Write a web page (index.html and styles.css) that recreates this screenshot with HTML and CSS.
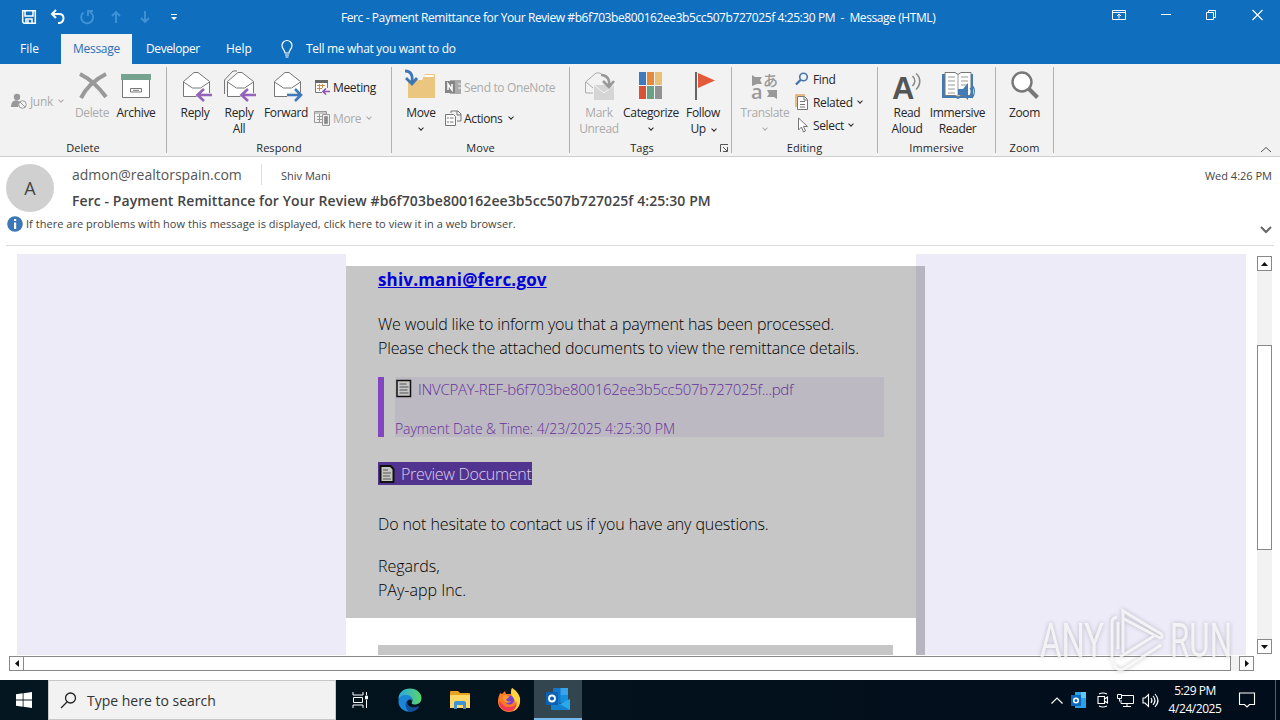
FILE: index.html
```html
<!DOCTYPE html>
<html lang="en">
  <head>
    <meta charset="UTF-8" />
    <meta name="viewport" content="width=device-width, initial-scale=1.0" />
    <title>Message (HTML)</title>
    <link rel="stylesheet" href="styles.css">
  </head>
  <body>
    <header class="titlebar">
      <div class="quick">
        <svg width="16" height="16" viewBox="0 0 16 16" fill="none" stroke="#fff" stroke-width="1.5"><path d="M1.7 1.7h12.6v12.6H3L1.7 13zM4 2v5h8V2M5 14v-4h6v4M7 11v3" /></svg>
        <svg width="16" height="16" viewBox="0 0 16 16" fill="none" stroke="#fff" stroke-width="2"><path d="M6 1L2 5l4 4M2 5h7c6 0 6 8 0 9H8" /></svg>
        <svg class="dim" width="16" height="16" viewBox="0 0 16 16" fill="none" stroke="#7cc0f2" stroke-width="1.8"><path d="M4.5 3.5A6 6 0 1 0 11 3M9 7V2h5" /></svg>
        <svg class="dim" width="16" height="16" viewBox="0 0 16 16" fill="none" stroke="#7cc0f2" stroke-width="1.8"><path d="M8 14V3M4 7l4-4 4 4" /></svg>
        <svg class="dim" width="16" height="16" viewBox="0 0 16 16" fill="none" stroke="#7cc0f2" stroke-width="1.8"><path d="M8 2v11M4 9l4 4 4-4" /></svg>
        <svg width="16" height="16" viewBox="0 0 16 16" fill="#fff"><path d="M5 5h6v1H5zM5 8h6l-3 3z" /></svg>
      </div>
      <div class="title">Ferc - Payment Remittance for Your Review #b6f703be800162ee3b5cc507b727025f 4:25:30 PM&nbsp; -&nbsp; Message (HTML)</div>
      <div class="window_buttons">
        <svg width="14" height="12" viewBox="0 0 14 12" fill="none" stroke="#fff"><path d="M.5 1.5h13v9H.5zM.5 3.5h13M7 9.500V5M5 7l2-2 2 2" /></svg>
        <svg width="10" height="12" viewBox="0 0 10 12" fill="none" stroke="#fff"><path d="M0 5.500h10" /></svg>
        <svg width="11" height="12" viewBox="0 0 11 12" fill="none" stroke="#fff"><path d="M.5 3.500h7v7h-7zM2.500 3V1.500h7v7H8" /></svg>
        <svg width="11" height="12" viewBox="0 0 11 12" fill="none" stroke="#fff" stroke-width="1.100"><path d="M.5 1l10 10M10.500 1l-10 10" /></svg>
      </div>
    </header>

    <nav class="tabs">
      <a class="tab file">File</a>
      <a class="tab active">Message</a>
      <a class="tab developer">Developer</a>
      <a class="tab help">Help</a>
      <svg width="14" height="18" viewBox="0 0 14 18" fill="none" stroke="#fff" stroke-width="1.200"><path d="M5 13c0-3-3-4-3-7.500a5 5 0 0 1 10 0C12 9 9 10 9 13zM5 15h4M5.500 17h3" /></svg>
      <a class="tab tell">Tell me what you want to do</a>
    </nav>

    <section class="ribbon">
      <div class="group g_delete">
        <div class="tools">
          <div class="stack middle junk">
            <div class="small off">
              <svg width="16" height="16" viewBox="0 0 16 16"><circle cx="6" cy="4" r="3.200" fill="#999" /><path d="M0 14c0-8 8-8 9-4l-2 4z" fill="#999" /><g fill="#f2f2f2" stroke="#999"><circle cx="11.500" cy="11.500" r="3.800" /><path d="M9 9l5 5" /></g></svg>
              <span>Junk</span><i class="arrow"></i>
            </div>
          </div>
          <div class="big off">
            <svg width="32" height="32" viewBox="0 0 32 32" fill="none" stroke="#999" stroke-width="4"><path d="M4 4c8 4 18 12 26 23M30 4C20 9 10 18 5 28" /></svg>
            <span>Delete</span>
          </div>
          <div class="big">
            <svg width="32" height="32" viewBox="0 0 32 32"><path d="M2.500 9h27v18.500h-27z" fill="#fff" stroke="#777" /><path d="M1 4h30v6H1z" fill="#75a38f" /><path d="M10.500 18.500h11v3.500h-11zM13 20.300h6" fill="#fff" stroke="#777" /></svg>
            <span>Archive</span>
          </div>
        </div>
        <div class="caption">Delete</div>
      </div>

      <div class="group g_respond">
        <div class="tools">
          <div class="big">
            <svg width="32" height="32" viewBox="0 0 32 32"><path d="M4.500 11.500L15 2.500h4l11.500 9v15h-26z" fill="#fff" stroke="#777" /><path d="M4.500 12l9 6h8l9-6" fill="none" stroke="#777" /><path d="M16 25l7-7v5h10v4H23v5z" fill="#f2f2f2" /><path d="M33 25H19M25 19l-6.500 6 6.500 6" fill="none" stroke="#9463ba" stroke-width="2.600" /></svg>
            <span>Reply</span>
          </div>
          <div class="big">
            <svg width="32" height="32" viewBox="0 0 32 32"><path d="M1.500 24V10L10 1h4" fill="none" stroke="#777" /><path d="M4.500 11.500L15 2.500h4l11.500 9v15h-26z" fill="#fff" stroke="#777" /><path d="M4.500 12l9 6h8l9-6" fill="none" stroke="#777" /><path d="M16 25l7-7v5h10v4H23v5z" fill="#f2f2f2" /><path d="M33 25H19M25 19l-6.500 6 6.500 6" fill="none" stroke="#9463ba" stroke-width="2.600" /></svg>
            <span>Reply<br>All</span>
          </div>
          <div class="big forward">
            <svg width="32" height="32" viewBox="0 0 32 32"><path d="M4.500 11.500L15 2.500h4l11.500 9v15h-26z" fill="#fff" stroke="#777" /><path d="M4.500 12l9 6h8l9-6" fill="none" stroke="#777" /><path d="M33 25l-8-8v5H17v5h8v5z" fill="#f2f2f2" /><path d="M17 25h14M25 19l6 6-6 6" fill="none" stroke="#3d79bb" stroke-width="2.600" /></svg>
            <span>Forward</span>
          </div>
          <div class="stack two">
            <div class="small">
              <svg width="16" height="16" viewBox="0 0 16 16"><path d="M1.500 2.500h12v11h-12z" fill="#fff" stroke="#777" /><path d="M1 1h13v3H1z" fill="#666" /><path d="M3 6.500h8M3 9.500h8M5.500 5v7M8.500 5v7" stroke="#d08b45" /><path d="M8 9h8v7H8z" fill="#f2f2f2" /><path d="M16 12.500H9.500M12 9.500l-3 3 3 3" fill="none" stroke="#8b51b5" stroke-width="1.600" /></svg>
              <span>Meeting</span>
            </div>
            <div class="small off">
              <svg width="16" height="16" viewBox="0 0 16 16" fill="none" stroke="#999"><path d="M.5 1.500h12v11H.5zM1 3h11M3 6.500h7M3 9.500h6M5.500 4v8" /><path d="M8.500 4.500h7v11h-7z" fill="#eee" /><path d="M10.500 6.500h3v7h-3z" fill="#888" /></svg>
              <span>More</span><i class="arrow"></i>
            </div>
          </div>
        </div>
        <div class="caption">Respond</div>
      </div>

      <div class="group g_move">
        <div class="tools">
          <div class="big">
            <svg width="32" height="32" viewBox="0 0 32 32"><path d="M3 28V10h14l3-6h10v24z" fill="#eac67e" /><path d="M19 7l1-2h9v2z" fill="#fff" /><path d="M0 1c6 0 8 4 7 12M1 8l6 6 5-6" fill="none" stroke="#3e77b6" stroke-width="2.800" /></svg>
            <span>Move</span><i class="arrow"></i>
          </div>
          <div class="stack two">
            <div class="small off">
              <svg width="16" height="16" viewBox="0 0 16 16"><path d="M5 1h11v14H5z" fill="#aaa" /><path d="M13 5h3M13 9h3" stroke="#eee" /><path d="M0 2h10v12H0z" fill="#858585" /><path d="M3 11V5l4 6V5" fill="none" stroke="#fff" stroke-width="1.500" /></svg>
              <span>Send to OneNote</span>
            </div>
            <div class="small">
              <svg width="16" height="16" viewBox="0 0 16 16" fill="#fff" stroke="#777"><path d="M6 3V1h7l3 3v7h-4M12 1v4h4" fill="none" /><path d="M.5 4.500h8l2 2v9H.500z" /><path d="M3 7v2M3 11v2M5 8h3.500M5 12h3.500" /></svg>
              <span>Actions</span><i class="arrow"></i>
            </div>
          </div>
        </div>
        <div class="caption">Move</div>
      </div>

      <div class="group g_tags">
        <div class="tools">
          <div class="big off">
            <svg width="32" height="32" viewBox="0 0 32 32"><path d="M2.500 23V12L13 3h4l7 6M3 12l7 6M3 23h7" fill="none" stroke="#aaa" /><path d="M11 15h20v15H11z" fill="#d5d5d5" /><path d="M11 15l10 8 10-8" fill="none" stroke="#f2f2f2" /><path d="M18 5c7 0 9 5 8 12M20 11l6 6 5-6" fill="none" stroke="#999" stroke-width="2.600" /></svg>
            <span>Mark<br>Unread</span>
          </div>
          <div class="big categorize">
            <svg width="32" height="32" viewBox="0 0 32 32"><path d="M4 2h7v13H4z" fill="#3f7abb" /><path d="M12 2h7v13h-7z" fill="#e58a38" /><path d="M20 2h7v13h-7z" fill="#eac078" /><path d="M4 16h7v13H4z" fill="#d85236" /><path d="M12 16h7v13h-7z" fill="#68a186" /><path d="M20 16h7v13h-7z" fill="#929292" /></svg>
            <span>Categorize</span><i class="arrow"></i>
          </div>
          <div class="big">
            <svg width="32" height="32" viewBox="0 0 32 32"><path d="M8 2h2v28H8z" fill="#666" /><path d="M11 3l17 7.500L11 18z" fill="#e25a3a" /></svg>
            <span>Follow<br>Up <i class="arrow inline"></i></span>
          </div>
        </div>
        <div class="caption">Tags</div>
        <svg class="launcher" width="8" height="8" viewBox="0 0 8 8" fill="none" stroke="#555"><path d="M.5 8V.500H8M3 3l4 4M7.500 3v4.500H3" /></svg>
      </div>

      <div class="group g_editing">
        <div class="tools">
          <div class="big off translate">
            <svg width="32" height="32" viewBox="0 0 32 32" fill="#999"><path d="M3 5l3 2h7l-2 3 2 4H8l-5 2zM28 29l-3-2h-7l2-3-2-4h10z" /><text x="14" y="16" class="glyph_jp">あ</text><text x="2" y="29" class="glyph_a">a</text></svg>
            <span>Translate</span><i class="arrow"></i>
          </div>
          <div class="stack three">
            <div class="small">
              <svg width="14" height="14" viewBox="0 0 14 14" fill="none" stroke="#4676ab"><circle cx="8.500" cy="5" r="3.800" stroke-width="1.600" /><path d="M5.500 8L1 12.500" stroke-width="2.400" /></svg>
              <span>Find</span>
            </div>
            <div class="small">
              <svg width="14" height="16" viewBox="0 0 14 16"><path d="M1 13V1h9" fill="none" stroke="#e2a860" stroke-width="1.400" /><path d="M2.500 2.500h7l3 3v10h-10zM9 3v3h3M5 7.500h5M5 10.500h5M5 13h5" fill="#fff" stroke="#777" /></svg>
              <span>Related</span><i class="arrow"></i>
            </div>
            <div class="small">
              <svg width="14" height="16" viewBox="0 0 14 16"><path d="M3.500 1v12l3-3 2 5 2-1-2-4.500h4z" fill="#fff" stroke="#777" /></svg>
              <span>Select</span><i class="arrow"></i>
            </div>
          </div>
        </div>
        <div class="caption">Editing</div>
      </div>

      <div class="group g_immersive">
        <div class="tools">
          <div class="big">
            <svg width="32" height="32" viewBox="0 0 32 32" fill="none"><text x="1" y="29" class="glyph_read">A</text><path d="M21.500 6c3 3 3 7 0 10M25 3.500c5 4 5 11 0 16" stroke="#888" stroke-width="1.600" /></svg>
            <span>Read<br>Aloud</span>
          </div>
          <div class="big reader">
            <svg width="32" height="32" viewBox="0 0 32 32"><path d="M0 4h31v24H18l-2 1-2-1H0z" fill="#417ab4" /><path d="M3 2.500h10l3 2 3-2h10v23H19l-3 1-3-1H3z" fill="#fff" stroke="#777" /><path d="M6 7h7M6 11h7M6 15h7M6 19h7M6 23h7M19 7h7M19 11h7M19 15h7M16 5v22" stroke="#999" /><path d="M16 19h5l5-6v17l-5-5h-5z" fill="#417ab4" /><path d="M28 18c2 2 2 5 0 7M30 15c3 4 3 9 0 13" fill="none" stroke="#417ab4" stroke-width="1.300" /></svg>
            <span>Immersive<br>Reader</span>
          </div>
        </div>
        <div class="caption">Immersive</div>
      </div>

      <div class="group g_zoom">
        <div class="tools">
          <div class="big">
            <svg width="32" height="32" viewBox="0 0 32 32"><circle cx="13" cy="12" r="9.500" fill="#fff" stroke="#777" stroke-width="2.400" /><path d="M20 19l8.500 8.500" stroke="#777" stroke-width="4" /></svg>
            <span>Zoom</span>
          </div>
        </div>
        <div class="caption">Zoom</div>
      </div>
      <svg class="collapse" width="12" height="7" viewBox="0 0 12 7" fill="none" stroke="#555"><path d="M1 6l5-4.500L11 6" /></svg>
    </section>

    <section class="info">
      <div class="avatar">A</div>
      <div class="details">
        <div class="from_line">
          <span class="from">admon@realtorspain.com</span>
          <span class="to">Shiv Mani</span>
          <span class="date">Wed 4:26 PM</span>
        </div>
        <h1 class="subject">Ferc - Payment Remittance for Your Review #b6f703be800162ee3b5cc507b727025f 4:25:30 PM</h1>
      </div>
      <div class="notice">
        <svg width="16" height="16" viewBox="0 0 16 16"><circle cx="8" cy="8" r="7.800" fill="#3b78b5" /><path d="M7 3h2.200v2H7zM7 6.500h2.200V13H7z" fill="#fff" /></svg>
        <span>If there are problems with how this message is displayed, click here to view it in a web browser.</span>
        <svg class="expand" width="12" height="8" viewBox="0 0 12 8" fill="none" stroke="#666" stroke-width="2"><path d="M1 1l5 5 5-5" /></svg>
      </div>
    </section>

    <main class="reading">
      <div class="page">
        <div class="side"></div>
        <article class="mail">
          <div class="content">
            <a class="recipient">shiv.mani@ferc.gov</a>
            <p class="intro">We would like to inform you that a payment has been processed.<br>Please check the attached documents to view the remittance details.</p>
            <div class="attachment">
              <div class="attachment_body">
                <div class="file_name">
                  <svg width="18" height="20" viewBox="0 0 18 20"><path d="M2 1.500h13.500v16H2z" fill="#c6c6c6" stroke="#111" stroke-width="1.500" /><path d="M4.500 5h7M4.500 8h9M4.500 11h8M4.500 14h9" stroke="#555" /></svg>
                  <span>INVCPAY-REF-b6f703be800162ee3b5cc507b727025f...pdf</span>
                </div>
                <div class="file_date">Payment Date &amp; Time: 4/23/2025 4:25:30 PM</div>
              </div>
            </div>
            <a class="preview">
              <svg width="18" height="20" viewBox="0 0 18 20"><path d="M2.500 2h10l3 3v13h-13z" fill="#c6c6c0" stroke="#111" stroke-width="2" /><path d="M5 6h5M5 9h8M5 12h7M5 15h8" stroke="#555" /></svg>
              <span>Preview Document</span>
            </a>
            <p class="contact">Do not hesitate to contact us if you have any questions.</p>
            <p class="regards">Regards,<br>PAy-app Inc.</p>
          </div>
          <div class="footer_block"></div>
        </article>
        <div class="side right"><div class="shade"></div></div>
      </div>
      <div class="vscroll">
        <div class="btn"><svg width="7" height="4" viewBox="0 0 7 4"><path d="M0 4l3.500-4L7 4z" fill="#111" /></svg></div>
        <div class="vthumb"></div>
        <div class="btn"><svg width="7" height="4" viewBox="0 0 7 4"><path d="M0 0l3.500 4L7 0z" fill="#111" /></svg></div>
      </div>
      <div class="hscroll">
        <div class="btn"><svg width="4" height="7" viewBox="0 0 4 7"><path d="M4 0L0 3.500 4 7z" fill="#111" /></svg></div>
        <div class="hthumb"></div>
        <div class="btn"><svg width="4" height="7" viewBox="0 0 4 7"><path d="M0 0l4 3.500L0 7z" fill="#111" /></svg></div>
      </div>
      <svg class="watermark" width="204" height="70" viewBox="0 0 204 70">
        <text x="6" y="52" textLength="64" lengthAdjust="spacingAndGlyphs">ANY</text>
        <path d="M78 56V18q0-5 5-6M84 44V17M89 48V6l38 23q3 3-1 4L90 14M80 60q4 7 10 4l37-24M86 52l34-21" />
        <text x="136" y="52" textLength="62" lengthAdjust="spacingAndGlyphs">RUN</text>
      </svg>
    </main>

    <footer class="taskbar">
      <div class="start"><svg width="16" height="16" viewBox="0 0 16 16" fill="#fff"><path d="M0 2.300L6.700 1.300v6.300H0zM7.500 1.200L16 0v7.600H7.500zM0 8.400h6.700v6.300L0 13.700zM7.500 8.400H16V16l-8.500-1.200z" /></svg></div>
      <div class="search">
        <svg width="17" height="17" viewBox="0 0 17 17" fill="none" stroke="#222" stroke-width="1.300"><circle cx="10.500" cy="6" r="5" /><path d="M7 10l-6 6" /></svg>
        <span>Type here to search</span>
      </div>
      <div class="app"><svg width="16" height="16" viewBox="0 0 16 16" fill="none" stroke="#fff"><path d="M0 0v3h10V0M.5 5.500h9v5h-9zM0 16v-3h10v3M13.500 0v3M13.500 8v8" /><path d="M12.500 4h2v3h-2z" fill="#fff" /></svg></div>
      <div class="app">
        <svg width="24" height="24" viewBox="0 0 24 24">
          <defs>
            <linearGradient id="edgeTop"><stop offset="0" stop-color="#2aa8e0" /><stop offset="1" stop-color="#5bd46c" /></linearGradient>
          </defs>
          <path d="M.500 12C0 5 5 .500 12 .500c7 0 11.500 5 11.500 9.500 0 5-4 6.500-7 6.500-2.500 0-3.500-1-2.500-2.500C15.500 11 13 8 9 8 4 8 1 10 .500 12z" fill="url(#edgeTop)" />
          <path d="M.500 13C1 8 5 6.500 9 7c4 .5 6 3.500 5 6-1-2-4-2-5 1-1 4 2 9 6 9C7 25.500 0 20 .500 13z" fill="#1b86d8" />
          <path d="M9 12.500c-1 5 5 9 12.500 5.500-2 4-6 6-9.500 5.500-4-1-6-7-3-11z" fill="#12509c" />
        </svg>
      </div>
      <div class="app"><svg width="22" height="20" viewBox="0 0 22 20"><path d="M1 2q0-1 1-1h7l2 2h9q1 0 1 1v14H1z" fill="#e8a21f" /><path d="M1 5h20v13H1z" fill="#ffd766" /><path d="M5 19v-6q0-2 2-2h8q2 0 2 2v6h-3v-4H8v4z" fill="#3f93d3" /></svg></div>
      <div class="app"><svg width="24" height="24" viewBox="0 0 24 24"><path d="M3 5l2 1 3-3 1 3 5 0 1-6c4 3 8 7 8 13 0 7-5 11-11 11S.5 19 1 13c0-3 1-5 2-8z" fill="#ff7a26" /><path d="M15 0c5 3 9 8 8 14-1 5-4 8-7 9 3-4 4-8 1-12-3-3-4-7-2-11z" fill="#ffd43b" /><path d="M2 13c3 2 5 7 11 6 5 0 6-3 6-6 2 6-2 10-7 10S2 20 2 13z" fill="#f13a55" /><circle cx="12.500" cy="12" r="4.500" fill="#7a41cf" /><path d="M6 8c3-2 5 0 7 1-2 0-2 2-4 2 0 2 3 3 5 2-3 4-9 1-8-5z" fill="#ff9a2d" /></svg></div>
      <div class="app current"><svg width="24" height="24" viewBox="0 0 24 24"><path d="M7 1h15v15H7z" fill="#1177cb" /><path d="M14.500 1H22v7h-7.500z" fill="#39a5e8" /><path d="M14.500 8H22v7h-7.500z" fill="#1490df" /><path d="M5 12l9 5 10-5v11H5z" fill="#29a9ea" /><path d="M5 12l19 11H5z" fill="#1481ce" /><path d="M0 5h12v13H0z" fill="#0a62b5" /><circle cx="6" cy="11.500" r="3" fill="none" stroke="#fff" stroke-width="1.800" /></svg></div>
      <div class="tray">
        <svg width="12" height="7" viewBox="0 0 12 7" fill="none" stroke="#fff" stroke-width="1.200"><path d="M.5 6.500L6 1l5.500 5.500" /></svg>
        <svg width="16" height="16" viewBox="0 0 16 16"><path d="M4 0h11v16H4z" fill="#2aa3e6" /><path d="M10 0h5v6h-5z" fill="#62c8f5" /><path d="M0 3h10v11H0z" fill="#0b68bd" /><circle cx="5" cy="8.500" r="2.300" fill="none" stroke="#fff" stroke-width="1.500" /></svg>
        <svg class="camera" width="12" height="16" viewBox="0 0 12 16" fill="none" stroke="#fff" stroke-width="1.100"><path d="M1 4.500h6.500v7H1zM7.500 7l3-2v6l-3-2M2 2q4-2 8 0M2 14q4 2 8 0" /></svg>
        <svg width="17" height="15" viewBox="0 0 17 15" fill="none" stroke="#fff"><path d="M5 2.500h11.500v8H4V7M10 11v3M6 13.500h8M.5 1.500h4v4h-4zM2.500 5.500v3" /></svg>
        <svg width="17" height="15" viewBox="0 0 17 15" fill="none" stroke="#fff" stroke-width="1.100"><path d="M1 5v5h2l3.500 3.500v-12L3 5zM9 5q2 2.500 0 5M11 3q4 4.500 0 9M13 1q6 6.500 0 13" /></svg>
        <div class="clock">5:29 PM<br>4/24/2025</div>
        <svg class="bubble" width="16" height="16" viewBox="0 0 16 16" fill="none" stroke="#fff" stroke-width="1.100"><path d="M.5 1h15v11.500h-5L8 15l-2.500-2.500h-5z" /></svg>
        <div class="peek"></div>
      </div>
    </footer>
  </body>
</html>
```
FILE: styles.css
```css
* {
  box-sizing: border-box;
}
body {
  margin: 0;
  width: 1280px;
  height: 720px;
  overflow: hidden;
  background-color: #fff;
  font-family: "Open Sans", "Noto Sans", sans-serif;
  font-size: 12px;
  color: #262626;
}
svg {
  display: block;
  flex-shrink: 0;
  overflow: visible;
}
span,
a,
.title {
  white-space: nowrap;
}

/* title bar */
.titlebar {
  height: 34px;
  background-color: #106ebe;
  display: flex;
  color: #fff;
}
.quick {
  display: flex;
  gap: 13px;
  padding: 9px 0 0 21px;
  width: 341px;
}
.quick .dim {
  opacity: 0.45;
}
.title {
  width: 777px;
  line-height: 35px;
  letter-spacing: -0.41px;
}
.window_buttons {
  display: flex;
  padding-top: 9px;
  margin-left: -6px;
  gap: 35px;
}

/* tabs */
.tabs {
  height: 30px;
  background-color: #106ebe;
  display: flex;
  align-items: center;
  color: #fff;
  line-height: 30px;
}
.file {
  width: 61px;
  padding-left: 20px;
}
.active {
  width: 71px;
  text-align: center;
  background-color: #f2f2f2;
  color: #2a6fb5;
  letter-spacing: -0.3px;
}
.developer {
  width: 94px;
  padding-left: 14px;
  letter-spacing: -0.4px;
}
.help {
  width: 54px;
}
.tell {
  margin-left: 12px;
  letter-spacing: -0.3px;
}

/* ribbon */
.ribbon {
  height: 93px;
  background-color: #f2f2f2;
  border-bottom: 1px solid #cfcfcf;
  display: flex;
  padding-top: 3px;
  position: relative;
}
.group {
  height: 86px;
  border-right: 1px solid #b1b1b1;
  display: flex;
  flex-direction: column;
  position: relative;
}
.tools {
  height: 70px;
  flex-shrink: 0;
  display: flex;
  letter-spacing: -0.35px;
}
.caption {
  height: 16px;
  padding-top: 3px;
  text-align: center;
  font-size: 11px;
  line-height: 16px;
  letter-spacing: 0.05px;
}
.g_delete {
  width: 167px;
}
.g_delete .tools {
  padding-left: 11px;
}
.g_respond {
  width: 225px;
}
.g_respond .tools {
  padding-left: 6px;
}
.g_move {
  width: 178px;
}
.g_move .tools {
  padding-left: 7px;
}
.g_tags {
  width: 162px;
}
.g_tags .tools {
  padding-left: 7px;
}
.g_tags .caption {
  padding-right: 17px;
}
.g_editing {
  width: 146px;
}
.g_editing .tools {
  padding-left: 7px;
}
.g_immersive {
  width: 118px;
}
.g_immersive .tools {
  padding-left: 7px;
}
.g_zoom {
  width: 58px;
}
.big {
  width: 44px;
  padding-top: 3px;
  display: flex;
  flex-direction: column;
  align-items: center;
  text-align: center;
  line-height: 16px;
}
.big span {
  margin-top: 3px;
}
.forward {
  width: 50px;
}
.categorize {
  width: 60px;
}
.translate {
  width: 52px;
}
.reader {
  width: 57px;
}
.g_zoom .big {
  width: 58px;
}
.off {
  color: #ababab;
}
.stack {
  display: flex;
  flex-direction: column;
}
.junk {
  width: 59px;
  padding-top: 26px;
}
.two {
  padding: 12px 0 0 3px;
  gap: 15px;
}
.g_move .two {
  padding-left: 2px;
}
.three {
  padding: 4px 0 0 4px;
  gap: 7px;
}
.small {
  display: flex;
  align-items: center;
  height: 16px;
  flex-shrink: 0;
  gap: 3px;
}
.three .small {
  gap: 4px;
}
.arrow {
  width: 4px;
  height: 4px;
  flex-shrink: 0;
  border: solid currentColor;
  border-width: 0 1px 1px 0;
  transform: rotate(45deg);
  margin: 0 0 3px 3px;
}
.three .arrow {
  margin-left: 1px;
}
.big > .arrow {
  margin: 5px 0 0;
}
.arrow.inline {
  display: inline-block;
  margin-bottom: 2px;
}
.launcher {
  position: absolute;
  right: 3px;
  bottom: 1px;
}
.collapse {
  position: absolute;
  right: 8px;
  bottom: 3px;
}
.glyph_jp {
  font: 500 15px "Noto Sans CJK JP", sans-serif;
}
.glyph_a {
  font: 600 20px "Open Sans", sans-serif;
}
.glyph_read {
  font: 700 31px "Liberation Sans", sans-serif;
  fill: #555;
}

/* message header */
.info {
  height: 89px;
  margin: 0 6px;
  border-bottom: 1px solid #dcdcdc;
  display: grid;
  grid-template-columns: 66px 1fr;
  grid-template-rows: 58px 1fr;
  color: #444;
}
.avatar {
  width: 48px;
  height: 48px;
  margin-top: 7px;
  border-radius: 50%;
  background-color: #d0d0d0;
  text-align: center;
  font-size: 18px;
  line-height: 49px;
}
.from_line {
  display: flex;
  height: 32px;
  padding-top: 7px;
}
.from {
  width: 190px;
  height: 21px;
  border-right: 1px solid #dcdcdc;
  font-size: 14px;
  line-height: 21px;
  color: #555;
}
.to,
.date {
  font-size: 11px;
  line-height: 24px;
}
.to {
  padding-left: 19px;
}
.date {
  margin-left: auto;
  margin-right: 2px;
}
.subject {
  margin: 0;
  font-size: 14px;
  font-weight: 600;
  line-height: 24px;
  letter-spacing: 0.08px;
  white-space: nowrap;
}
.notice {
  grid-column: 1 / 3;
  display: flex;
  gap: 3px;
  padding: 1px 0 0 1px;
  font-size: 11px;
  line-height: 16px;
  letter-spacing: 0.03px;
}
.expand {
  margin: 10px 2px 0 auto;
}

/* message body */
.reading {
  height: 434px;
  position: relative;
  display: grid;
  grid-template-columns: 1257px 15px;
  grid-template-rows: 410px 15px;
}
.page {
  padding: 8px 0 1px 17px;
  display: grid;
  grid-template-columns: 329px 570px 330px;
}
.side {
  background-color: #edebf7;
}
.shade {
  width: 9px;
  margin-top: 12px;
  height: 389px;
  background-color: #b7b5c0;
}
.mail {
  padding-top: 12px;
  font-size: 16px;
  font-weight: 300;
  color: #000;
}
.content {
  height: 352px;
  background-color: #c6c6c6;
  padding: 2px 32px 0;
}
.recipient {
  display: inline-block;
  font-size: 17px;
  font-weight: 700;
  line-height: 24px;
  letter-spacing: 0.17px;
  color: #0000d8;
  text-decoration: underline;
}
.intro {
  margin: 20px 0 17px;
  line-height: 24px;
  letter-spacing: -0.15px;
}
.attachment {
  height: 60px;
  border-left: 6px solid #8446c0;
  padding-left: 11px;
  color: #66309a;
}
.attachment_body {
  height: 60px;
  background-color: #bcb9c2;
}
.file_name {
  display: flex;
  gap: 5px;
  font-size: 15px;
  line-height: 24px;
  height: 40px;
  letter-spacing: -0.28px;
}
.file_name svg {
  margin-top: 2px;
}
.file_date {
  font-size: 14px;
  line-height: 23px;
  letter-spacing: -0.07px;
}
.preview {
  display: flex;
  gap: 5px;
  width: 154px;
  height: 23px;
  margin-top: 25px;
  background-color: #51348f;
  color: #ddd0ee;
  line-height: 24px;
  letter-spacing: -0.3px;
}
.preview svg {
  margin-top: 2px;
}
.contact {
  margin: 27px 0 18px;
  line-height: 24px;
  letter-spacing: -0.11px;
}
.regards {
  margin: 0;
  line-height: 24px;
}
.footer_block {
  height: 10px;
  margin: 27px 23px 0 32px;
  background-color: #c6c6c6;
}
.btn {
  width: 15px;
  height: 15px;
  border: 1px solid #888;
  background-color: #fff;
  display: flex;
  align-items: center;
  justify-content: center;
}
.vscroll {
  margin: 10px 0 2px;
  background-color: #f2f2f2;
  display: flex;
  flex-direction: column;
  justify-content: space-between;
}
.vthumb {
  height: 205px;
  margin: 74px 0 89px;
  border: 1px solid #888;
  background-color: #fff;
}
.hscroll {
  display: flex;
  margin-left: 9px;
  width: 1245px;
  background-color: #f2f2f2;
}
.hthumb {
  width: 1207px;
  margin-right: auto;
  border: 1px solid #888;
  border-left: 0;
  background-color: #fff;
}
.watermark {
  position: absolute;
  left: 1034px;
  top: 359px;
  font: 400 49px Roboto, sans-serif;
  fill: rgba(255, 255, 255, 0.75);
  filter: drop-shadow(0 0 2px rgba(80, 80, 90, 0.45));
}
.watermark path {
  fill: none;
  stroke: rgba(255, 255, 255, 0.75);
  stroke-width: 3;
}

/* taskbar */
.taskbar {
  height: 40px;
  background: linear-gradient(90deg, #04161f, #020d1b);
  display: flex;
  color: #fff;
}
.start {
  width: 48px;
  padding: 12px 16px;
}
.search {
  width: 288px;
  border: 1px solid #c8c8c8;
  background-color: #f2f2f2;
  display: flex;
  align-items: center;
  gap: 10px;
  padding-left: 11px;
  color: #333;
  font-size: 14px;
}
.app {
  width: 49.5px;
  display: flex;
  align-items: center;
  justify-content: center;
}
.current {
  width: 48px;
  background-color: #33454f;
  border-bottom: 2px solid #76b9ed;
}
.tray {
  margin-left: auto;
  display: flex;
  align-items: center;
  gap: 8px;
}
.camera {
  margin-left: 2px;
}
.clock {
  width: 56px;
  text-align: center;
  line-height: 18px;
  letter-spacing: -0.45px;
}
.bubble {
  margin-left: 8px;
}
.peek {
  width: 5px;
  height: 40px;
  margin-left: 12px;
  border-left: 1px solid #555f6a;
}
```
